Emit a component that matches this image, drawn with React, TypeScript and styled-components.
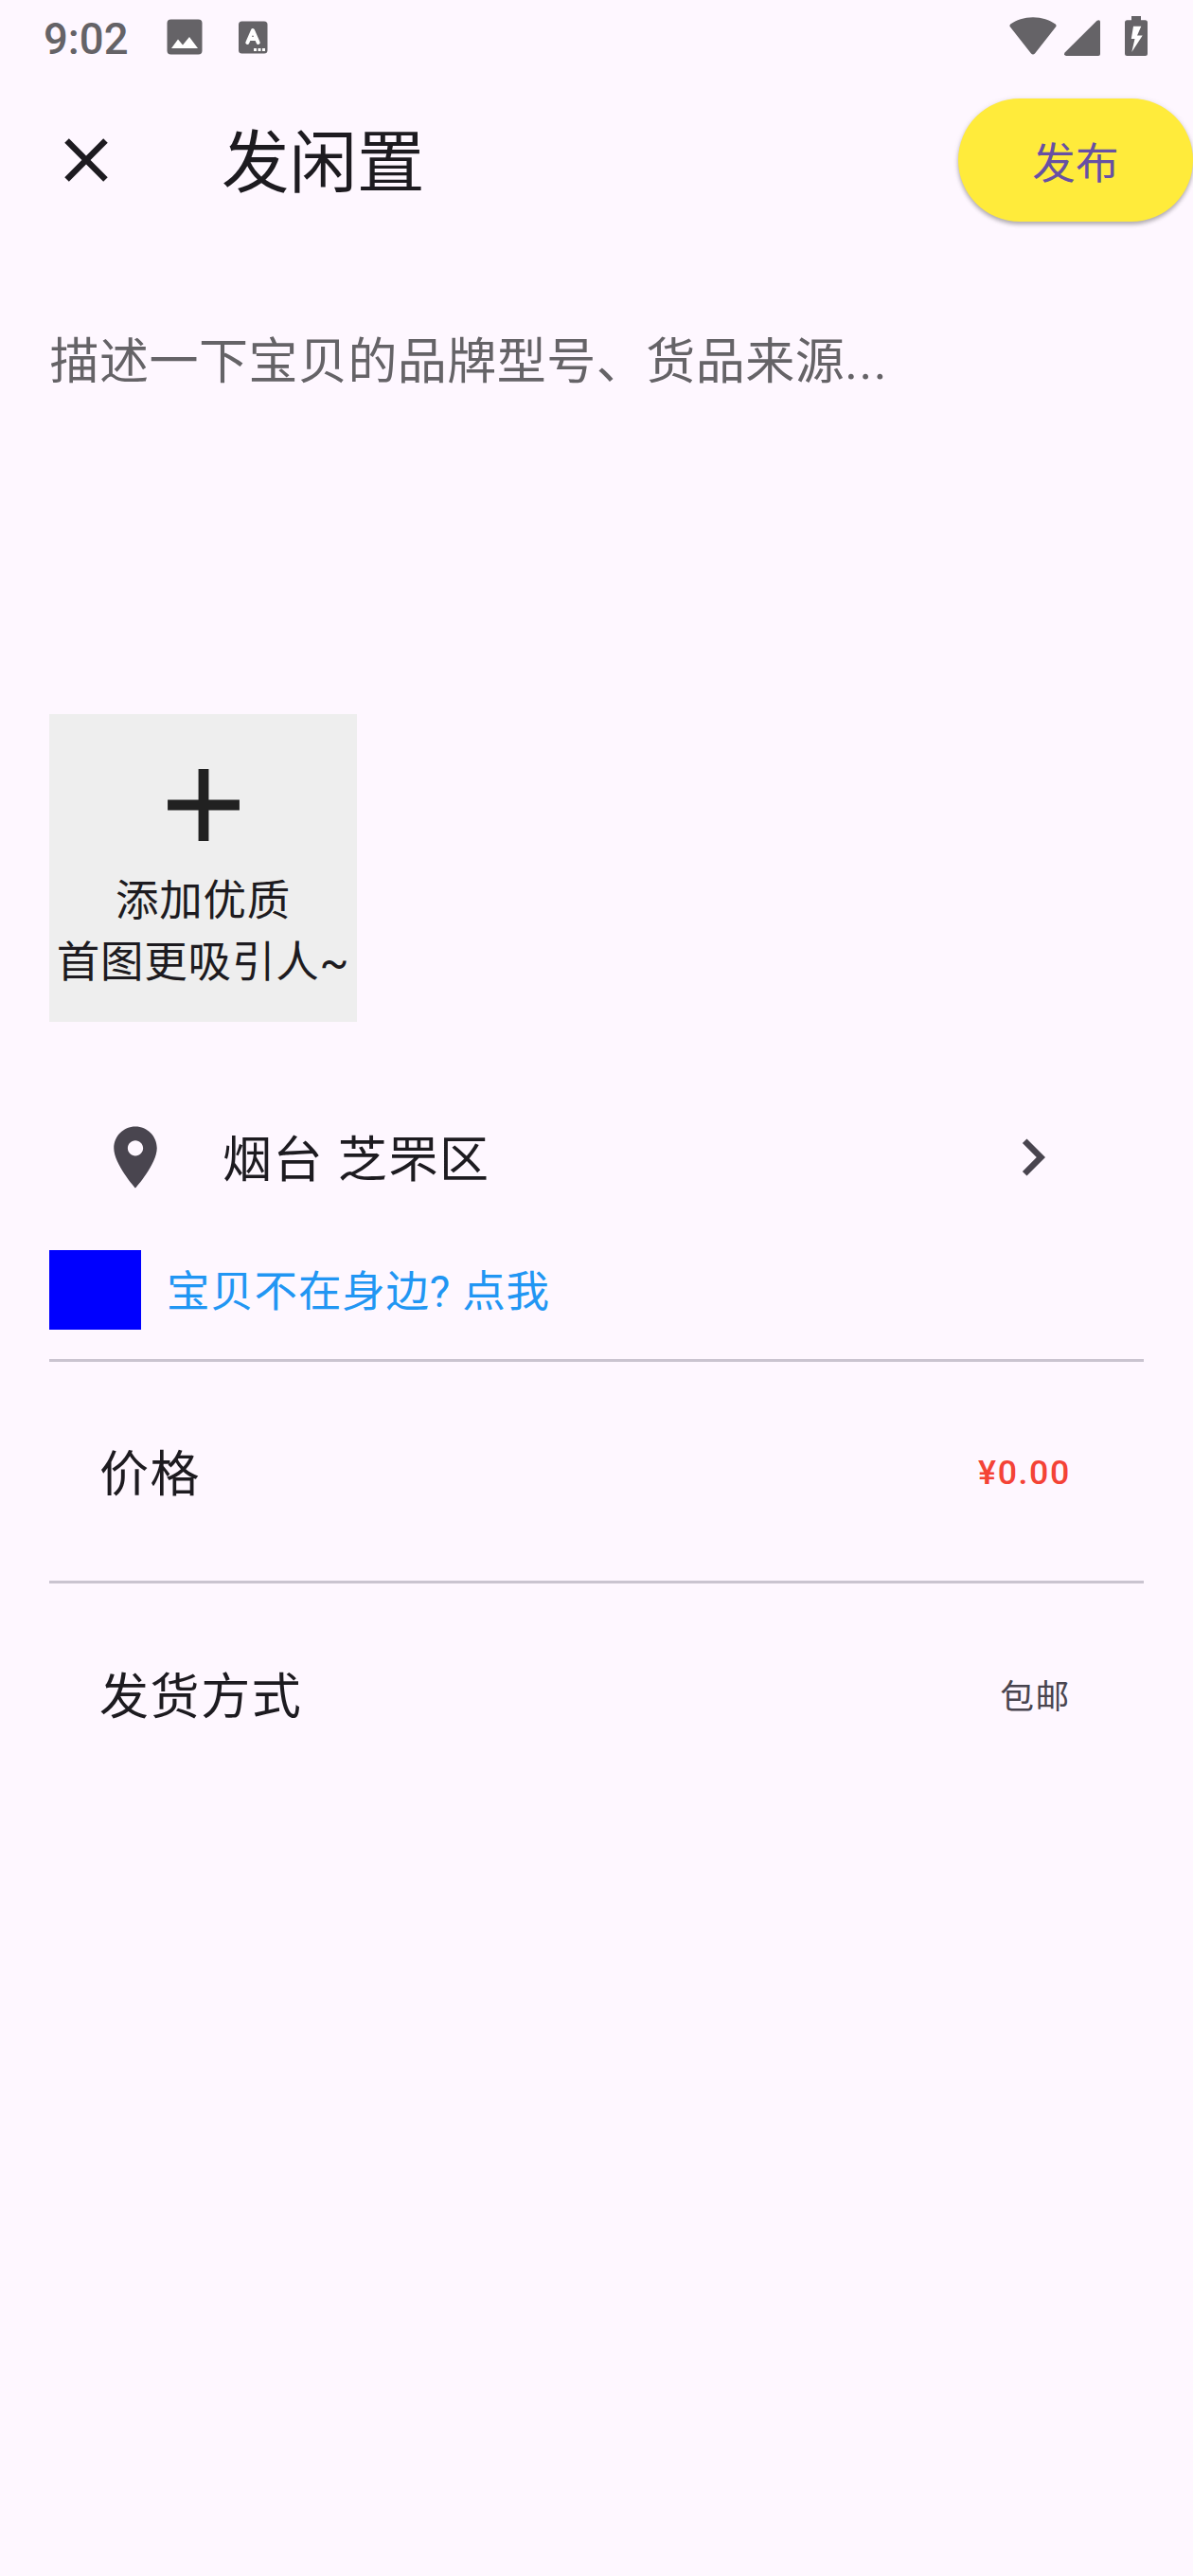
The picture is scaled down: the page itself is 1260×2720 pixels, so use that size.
import React from 'react';
import styled, { createGlobalStyle } from 'styled-components';

const GlobalStyle = createGlobalStyle`
  * { box-sizing: border-box; }
  html, body { margin: 0; padding: 0; background: #fef7ff; }
  body { font-family: Roboto, "Noto Sans CJK SC", sans-serif; color: #1d1b20; }
`;

const Screen = styled.div`
  display: flex;
  flex-direction: column;
  width: 1260px;
  height: 2720px;
  overflow: hidden;
  background: #fef7ff;
`;

const StatusBar = styled.div`
  display: flex;
  align-items: center;
  height: 78px;
  padding: 0 48px 0 46px;
  color: #656367;
`;

const Clock = styled.span`
  width: 130px;
  padding-top: 6px;
  font-size: 45.5px;
  font-weight: 500;
  line-height: 78px;
`;

const StatusIcon = styled.svg<{ $gap?: number }>`
  display: block;
  flex: none;
  margin-right: ${(p) => p.$gap ?? 0}px;
`;

const Spacer = styled.div`
  flex: 1;
`;

const AppBar = styled.header`
  display: flex;
  align-items: center;
  height: 182px;
`;

const CloseButton = styled.button`
  display: flex;
  align-items: center;
  justify-content: center;
  width: 182px;
  height: 182px;
  padding: 0;
  border: 0;
  background: transparent;
  color: #1d1b20;
`;

const Title = styled.h1`
  flex: 1;
  margin: 0 0 0 52px;
  padding-top: 8px;
  font-size: 71.5px;
  line-height: 92px;
  font-weight: 400;
`;

const PublishButton = styled.button`
  width: 248px;
  height: 130px;
  padding: 0;
  border: 0;
  border-radius: 65px;
  background: #ffeb3b;
  box-shadow: 0 3px 4px rgba(0, 0, 0, 0.26), 0 1px 6px rgba(0, 0, 0, 0.1);
  color: #6750a4;
  font-family: inherit;
  font-size: 45.5px;
  letter-spacing: 0.3px;
`;

const Body = styled.main`
  display: flex;
  flex-direction: column;
  padding: 0 52px;
`;

const Description = styled.div`
  height: 494px;
  padding: 84px 0 0 0.5px;
  color: #656367;
  font-size: 52px;
  line-height: 78px;
  letter-spacing: 0.48px;
  white-space: nowrap;
`;

const Ellipsis = styled.span`
  letter-spacing: 1.62px;
`;

const AddPhoto = styled.div`
  display: flex;
  flex-direction: column;
  align-items: center;
  width: 325px;
  height: 325px;
  padding-top: 31px;
  background: #eeeeee;
  color: #212121;
`;

const PhotoHint = styled.span<{ $top?: number }>`
  margin-top: ${(p) => p.$top ?? 0}px;
  color: #1d1b20;
  font-size: 45.5px;
  line-height: 65px;
  letter-spacing: 0.81px;
  white-space: nowrap;
`;

const Tile = styled.div<{ $top?: number }>`
  display: flex;
  align-items: center;
  height: 182px;
  margin-top: ${(p) => p.$top ?? 0}px;
  padding: 0 78px 0 52px;
  color: #49454f;
`;

const TileTitle = styled.span<{ $indent?: number; $drop: number }>`
  flex: 1;
  margin-left: ${(p) => p.$indent ?? 1}px;
  padding-top: ${(p) => p.$drop * 2}px;
  color: #1d1b20;
  font-size: 52px;
  line-height: 78px;
  letter-spacing: 1.62px;
`;

const Trailing = styled.span<{ $color?: string; $weight: number; $drop: number }>`
  margin-right: -1px;
  padding-top: ${(p) => p.$drop * 2}px;
  color: ${(p) => p.$color ?? '#49454f'};
  font-size: 35.75px;
  line-height: 52px;
  font-weight: ${(p) => p.$weight};
  letter-spacing: 1.62px;
`;

const RemoteRow = styled.div`
  display: flex;
  align-items: center;
  gap: 27px;
  height: 84px;
  margin: 7px 0 31px;
`;

const Swatch = styled.div`
  width: 97px;
  height: 84px;
  background: #0000ff;
`;

const RemoteLink = styled.span`
  padding-top: 4px;
  color: #2196f3;
  font-size: 45.5px;
  line-height: 65px;
  letter-spacing: 0.81px;
`;

const Divider = styled.div<{ $top?: number }>`
  height: 3px;
  margin-top: ${(p) => p.$top ?? 0}px;
  background: #cac4d0;
`;

const Glyph = styled.svg`
  display: block;
  flex: none;
`;

const MaterialIcon = ({ size, d }: { size: number; d: string }) => (
  <Glyph width={size} height={size} viewBox="0 0 24 24" fill="currentColor">
    <path d={d} />
  </Glyph>
);

const CLOSE = 'M19 6.41L17.59 5 12 10.59 6.41 5 5 6.41 10.59 12 5 17.59 6.41 19 12 13.41 17.59 19 19 17.59 13.41 12z';
const ADD = 'M19 13h-6v6h-2v-6H5v-2h6V5h2v6h6v2z';
const PIN = 'M12 2C8.13 2 5 5.13 5 9c0 5.25 7 13 7 13s7-7.75 7-13c0-3.87-3.13-7-7-7zm0 9.5c-1.38 0-2.5-1.12-2.5-2.5s1.12-2.5 2.5-2.5 2.5 1.12 2.5 2.5-1.12 2.5-2.5 2.5z';
const CHEVRON = 'M10 6L8.59 7.41 13.17 12l-4.58 4.59L10 18l6-6z';

export default function App() {
  return (
    <>
      <GlobalStyle />
      <Screen>
        <StatusBar>
          <Clock>9:02</Clock>
          <StatusIcon $gap={38} width="38" height="38" viewBox="0 0 38 38">
            <rect x="0.5" y="0.5" width="37" height="37" rx="4" fill="currentColor" />
            <path d="M5 31L12 21.5L17 27.5L24 19L33 31Z" fill="#fff" />
          </StatusIcon>
          <StatusIcon width="31" height="35" viewBox="0 0 31 35">
            <rect x="0" y="0.5" width="30.5" height="34" rx="3.5" fill="currentColor" />
            <path d="M9.3 23L15 10L20.7 23M11.5 19H18.5" fill="none" stroke="#fff" strokeWidth="4" strokeLinecap="round" strokeLinejoin="round" />
            <path d="M16 29h3v3h-3zM20.5 29h3v3h-3zM25 29h3v3h-3z" fill="#fff" />
          </StatusIcon>
          <Spacer />
          <StatusIcon $gap={8} width="50" height="42" viewBox="0 0 50 42">
            <path d="M25 0.2C15.5 0.2 7.5 3 1.2 7.6Q-0.2 9 1 10.5L23 38.5Q25 40.7 27 38.5L49 10.5Q50.2 9 48.8 7.6C42.5 3 34.5 0.2 25 0.2Z" fill="currentColor" />
          </StatusIcon>
          <StatusIcon $gap={26} width="38" height="40" viewBox="0 0 38 40">
            <path d="M34.6 2.7Q38 1.2 38 4V38Q38 40 36 40H2Q-1 39.5 0.6 36.6Z" fill="currentColor" />
          </StatusIcon>
          <StatusIcon width="24" height="44" viewBox="0 0 24 44">
            <path d="M7 0H17V4.3H21.5Q24 4.3 24 6.8V39.5Q24 42 21.5 42H2.5Q0 42 0 39.5V6.8Q0 4.3 2.5 4.3H7Z" fill="currentColor" />
            <path d="M9 10.7H17.3L13 20.5H18.7L7.3 38L10.5 24H6.8Z" fill="#fff" />
          </StatusIcon>
        </StatusBar>

        <AppBar>
          <CloseButton aria-label="关闭">
            <MaterialIcon size={78} d={CLOSE} />
          </CloseButton>
          <Title>发闲置</Title>
          <PublishButton>发布</PublishButton>
        </AppBar>

        <Body>
          <Description>
            描述一下宝贝的品牌型号、货品来源<Ellipsis>...</Ellipsis>
          </Description>

          <AddPhoto>
            <MaterialIcon size={130} d={ADD} />
            <PhotoHint $top={4}>添加优质</PhotoHint>
            <PhotoHint>首图更吸引人~</PhotoHint>
          </AddPhoto>

          <Tile $top={52}>
            <MaterialIcon size={78} d={PIN} />
            <TileTitle $indent={53} $drop={4}>烟台 芝罘区</TileTitle>
            <MaterialIcon size={78} d={CHEVRON} />
          </Tile>

          <RemoteRow>
            <Swatch />
            <RemoteLink>宝贝不在身边? 点我</RemoteLink>
          </RemoteRow>
          <Divider />

          <Tile $top={24}>
            <TileTitle $drop={5}>价格</TileTitle>
            <Trailing $color="#f44336" $weight={500} $drop={2}>¥0.00</Trailing>
          </Tile>
          <Divider $top={25} />

          <Tile $top={24}>
            <TileTitle $drop={5.5}>发货方式</TileTitle>
            <Trailing $weight={400} $drop={5}>包邮</Trailing>
          </Tile>
        </Body>
      </Screen>
    </>
  );
}
